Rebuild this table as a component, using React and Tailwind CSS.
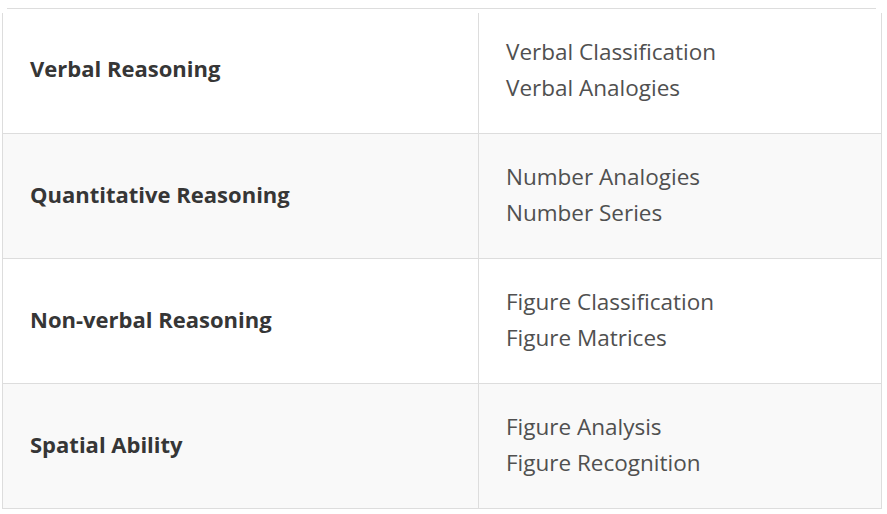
import React from "react";

const rows = [
  ["Verbal Reasoning", ["Verbal Classification", "Verbal Analogies"]],
  ["Quantitative Reasoning", ["Number Analogies", "Number Series"]],
  ["Non-verbal Reasoning", ["Figure Classification", "Figure Matrices"]],
  ["Spatial Ability", ["Figure Analysis", "Figure Recognition"]],
];

export default function App() {
  return (
    <div
      className="w-[887px] h-[514px] bg-white pt-[8px]"
      style={{ fontFamily: '"Open Sans", "Noto Sans", sans-serif' }}
    >
      <div className="h-px ml-[7px] w-[869px] bg-[#dddddd]" />
      <div className="mt-[4px] ml-[2px] w-[880px] border-x border-b border-[#dddddd]">
        {rows.map(([label, items], i) => (
          <div
            key={label}
            className={
              "flex " +
              (i < rows.length - 1 ? "border-b border-[#dddddd] " : "") +
              (i % 2 === 1 ? "bg-[#f9f9f9] " : "bg-white ") +
              (i === 0 ? "h-[121px]" : i === rows.length - 1 ? "h-[124px]" : "h-[125px]")
            }
          >
            <div
              className={
                "w-[475px] flex items-center px-[27px] text-[22px] font-bold text-[#363636] " +
                (i === 0 ? "pb-[9px]" : "pb-[3px]")
              }
            >
              {label}
            </div>
            <div
              className={
                "flex-1 border-l border-[#dddddd] flex flex-col justify-center px-[27px] text-[22.5px] leading-[36px] text-[#505050] " +
                (i === 0 ? "pb-[6px]" : "pb-[2px]")
              }
            >
              {items.map((t) => (
                <div key={t}>{t}</div>
              ))}
            </div>
          </div>
        ))}
      </div>
    </div>
  );
}
